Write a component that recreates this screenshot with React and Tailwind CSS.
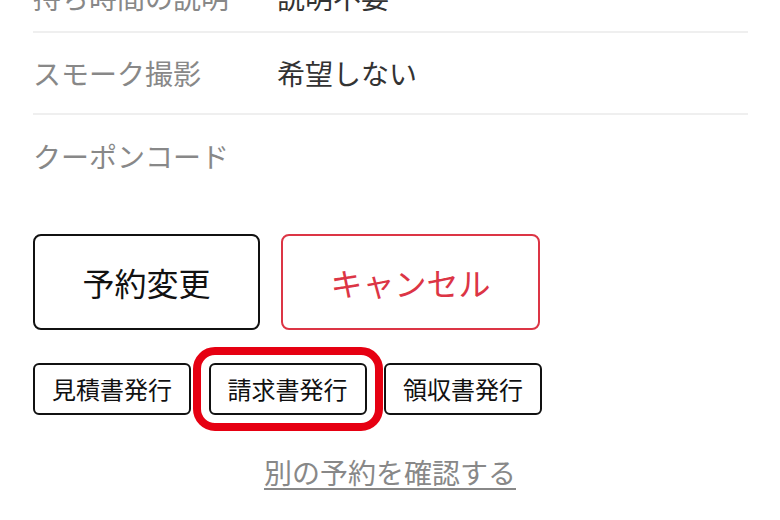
export default function App() {
  const font = { fontFamily: '"Noto Sans CJK JP", "Noto Sans", sans-serif' };

  return (
    <div className="w-[780px] h-[520px] overflow-hidden bg-white" style={font}>
      <div className="px-[33px] pr-[32px]">
        {/* 予約内容の行 */}
        <div className="-mt-[37px] h-[70px] flex items-center border-b-2 border-[#efefef] text-[28px] leading-none">
          <div className="w-[244px] text-[#888888]">持ち時間の説明</div>
          <div className="text-[#333333]">説明不要</div>
        </div>
        <div className="h-[82px] flex items-center border-b-2 border-[#efefef] text-[28px] leading-none">
          <div className="w-[244px] text-[#888888]">スモーク撮影</div>
          <div className="text-[#333333]">希望しない</div>
        </div>
        <div className="h-[82px] flex items-center text-[28px] leading-none">
          <div className="w-[244px] text-[#888888]">クーポンコード</div>
          <div className="text-[#333333]"></div>
        </div>

        {/* 変更・キャンセル */}
        <div className="mt-[37px] flex gap-[21px]">
          <button className="w-[227px] h-[96px] flex items-center justify-center border-2 border-[#111111] rounded-[8px] text-[32px] text-[#111111] bg-white">
            予約変更
          </button>
          <button className="w-[259px] h-[96px] flex items-center justify-center border-2 border-[#dc3545] rounded-[8px] text-[32px] text-[#dc3545] bg-white">
            キャンセル
          </button>
        </div>

        {/* 書類発行 */}
        <div className="mt-[33px] flex gap-[17.5px]">
          <button className="w-[158px] h-[52px] flex items-center justify-center border-2 border-[#111111] rounded-[6px] text-[24px] text-[#111111] bg-white">
            見積書発行
          </button>
          <div className="relative">
            <button className="w-[158px] h-[52px] flex items-center justify-center border-2 border-[#111111] rounded-[6px] text-[24px] text-[#111111] bg-white">
              請求書発行
            </button>
            <div className="absolute -inset-[16px] border-[8px] border-[#e60012] rounded-[22px] pointer-events-none" />
          </div>
          <button className="w-[158px] h-[52px] flex items-center justify-center border-2 border-[#111111] rounded-[6px] text-[24px] text-[#111111] bg-white">
            領収書発行
          </button>
        </div>
      </div>

      <div className="mt-[36px] flex justify-center">
        <a href="#" className="text-[28px] leading-[42px] text-[#888888] underline decoration-2 underline-offset-[4px]">
          別の予約を確認する
        </a>
      </div>
    </div>
  );
}
